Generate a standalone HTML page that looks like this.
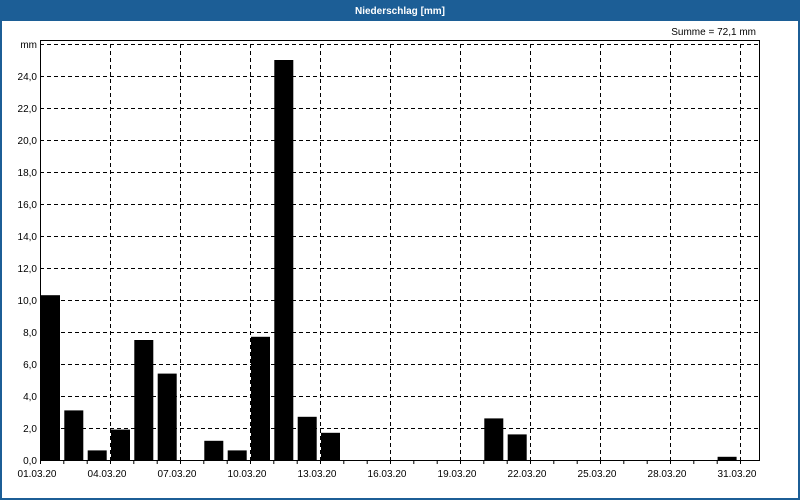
<!DOCTYPE html>
<html><head><meta charset="utf-8"><style>
html,body{margin:0;padding:0;width:800px;height:500px;overflow:hidden;background:#fff}
</style></head><body>
<svg width="800" height="500" xmlns="http://www.w3.org/2000/svg" font-family="Liberation Sans, DejaVu Sans, sans-serif" font-size="10">
<rect x="0" y="0" width="800" height="500" fill="#1c5e96"/>
<rect x="2" y="21" width="796" height="477" fill="#fff"/>
<text x="400" y="14" fill="#fff" font-weight="bold" text-anchor="middle" font-size="10">Niederschlag [mm]</text>
<text x="756" y="35" text-anchor="end" fill="#000">Summe = 72,1 mm</text>
<g stroke="#000" stroke-width="1" stroke-dasharray="4,3" fill="none">
<path d="M40 44.5H760M40 76.5H760M40 108.5H760M40 140.5H760M40 172.5H760M40 204.5H760M40 236.5H760M40 268.5H760M40 300.5H760M40 332.5H760M40 364.5H760M40 396.5H760M40 428.5H760"/>
<path d="M110.5 44V460M180.5 44V460M250.5 44V460M320.5 44V460M390.5 44V460M460.5 44V460M530.5 44V460M600.5 44V460M670.5 44V460M740.5 44V460"/>
</g>
<g fill="#000">
<rect x="41" y="295.2" width="19" height="164.8"/>
<rect x="64.3" y="410.4" width="19" height="49.6"/>
<rect x="87.7" y="450.4" width="19" height="9.6"/>
<rect x="111" y="429.6" width="19" height="30.4"/>
<rect x="134.3" y="340" width="19" height="120"/>
<rect x="157.7" y="373.6" width="19" height="86.4"/>
<rect x="204.3" y="440.8" width="19" height="19.2"/>
<rect x="227.7" y="450.4" width="19" height="9.6"/>
<rect x="251" y="336.8" width="19" height="123.2"/>
<rect x="274.3" y="60" width="19" height="400"/>
<rect x="297.7" y="416.8" width="19" height="43.2"/>
<rect x="321" y="432.8" width="19" height="27.2"/>
<rect x="484.3" y="418.4" width="19" height="41.6"/>
<rect x="507.7" y="434.4" width="19" height="25.6"/>
<rect x="717.6" y="456.8" width="19" height="3.2"/>
</g>
<rect x="40.5" y="40.5" width="719" height="420" fill="none" stroke="#000"/>
<g stroke="#000">
<path d="M40.5 460V464M63.8 460V464M87.2 460V464M110.5 460V464M133.8 460V464M157.2 460V464M180.5 460V464M203.8 460V464M227.2 460V464M250.5 460V464M273.8 460V464M297.2 460V464M320.5 460V464M343.8 460V464M367.2 460V464M390.5 460V464M413.8 460V464M437.2 460V464M460.5 460V464M483.8 460V464M507.2 460V464M530.5 460V464M553.8 460V464M577.2 460V464M600.5 460V464M623.8 460V464M647.2 460V464M670.5 460V464M693.8 460V464M717.2 460V464M740.5 460V464"/>
</g>
<g text-anchor="end" fill="#000">
<text x="37" y="48">mm</text>
<text x="37" y="80">24,0</text><text x="37" y="112">22,0</text><text x="37" y="144">20,0</text>
<text x="37" y="176">18,0</text><text x="37" y="208">16,0</text><text x="37" y="240">14,0</text>
<text x="37" y="272">12,0</text><text x="37" y="304">10,0</text><text x="37" y="336">8,0</text>
<text x="37" y="368">6,0</text><text x="37" y="400">4,0</text><text x="37" y="432">2,0</text>
<text x="37" y="464">0,0</text>
</g>
<g text-anchor="middle" fill="#000">
<text x="37" y="477">01.03.20</text><text x="107" y="477">04.03.20</text><text x="177" y="477">07.03.20</text>
<text x="247" y="477">10.03.20</text><text x="317" y="477">13.03.20</text><text x="387" y="477">16.03.20</text>
<text x="457" y="477">19.03.20</text><text x="527" y="477">22.03.20</text><text x="597" y="477">25.03.20</text>
<text x="667" y="477">28.03.20</text><text x="737" y="477">31.03.20</text>
</g>
</svg>
</body></html>
